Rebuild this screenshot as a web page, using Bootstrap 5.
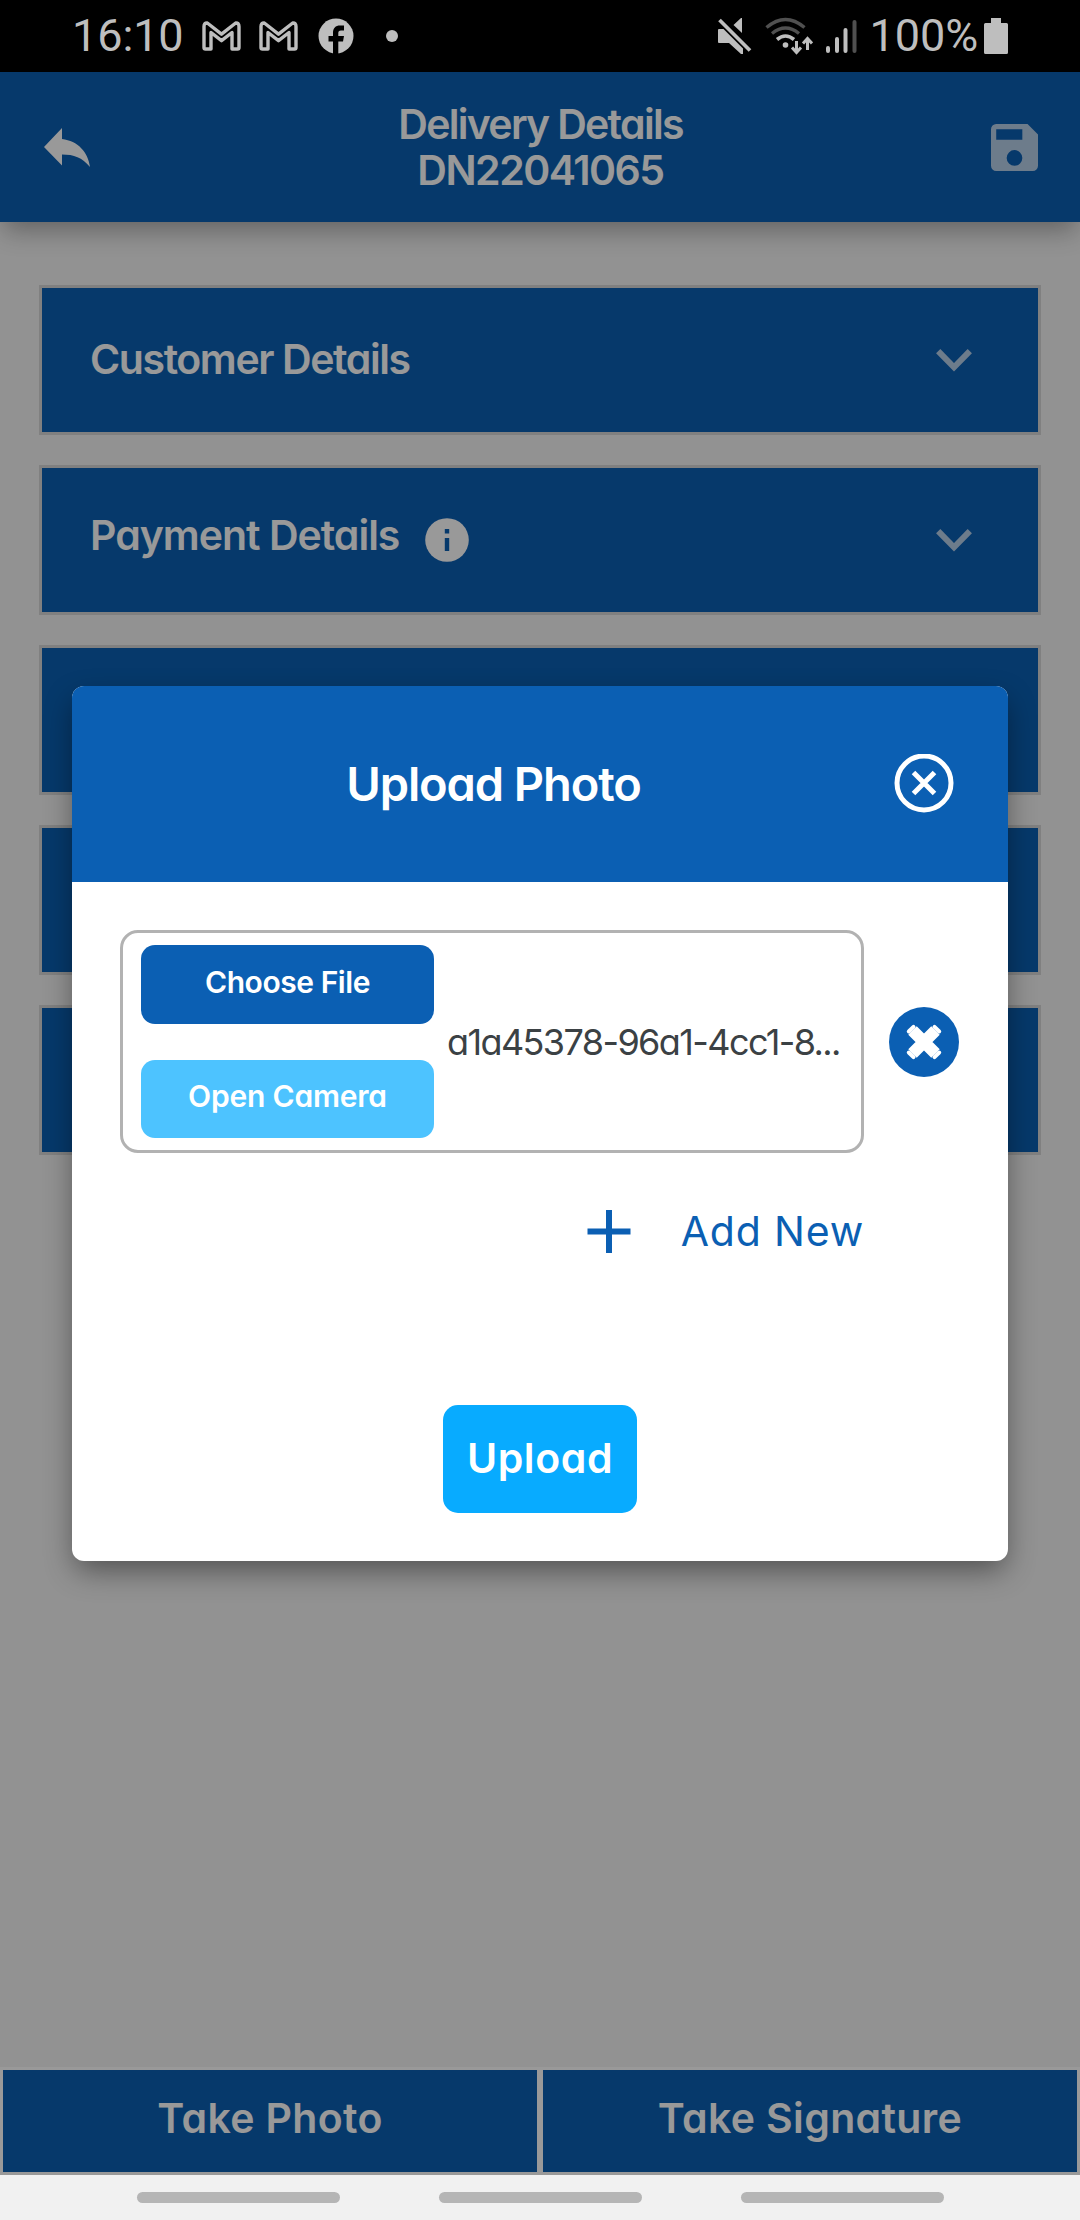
<!DOCTYPE html>
<html lang="en">
<head>
<meta charset="utf-8">
<meta name="viewport" content="width=device-width, initial-scale=1">
<title>Delivery Details</title>
<link rel="stylesheet" href="https://cdn.jsdelivr.net/npm/bootstrap@5.3.0/dist/css/bootstrap.min.css">
<style>
:root { --brand: #0b5fb3; --sky: #08abff; --sky-soft: #4dc3ff; }
body { font-family: Inter, "Open Sans", sans-serif; font-feature-settings: "cv11"; background: #f3f3f3; overflow: hidden; }
button { font-feature-settings: inherit; }
svg { display: block; flex: none; }
.screen { width: 1080px; height: 2220px; }

/* system bars */
.statusbar { height: 72px; background: #000; color: #bebebe; font: 400 45px/72px Roboto, sans-serif; padding: 0 72px; letter-spacing: -.1px; }
.note-a { margin-left: 18px; }
.note-b { margin-left: 20px; }
.note-dot { margin-left: 32px; }
.sig-gap { margin-left: 12px; }
.bat-gap { margin-left: 6px; }
.sysnav { height: 45px; background: #f1f1f1; gap: 99px; }
.sysnav span { width: 203px; height: 11px; border-radius: 6px; background: #b5b5b5; }

/* page */
.app-area { height: 2103px; background: #f3f3f3; }
.topbar { height: 150px; background: var(--brand); color: #fff; padding: 0 42px 0 44px; box-shadow: 0 12px 24px -4px rgba(0,0,0,.32); }
.topbar h1 { font-size: 41px; line-height: 46px; font-weight: 600; letter-spacing: -1.7px; }
.topbar h1 span { display: block; letter-spacing: -1.5px; }
.panels { padding: 63px 39px 0; gap: 30px; }
.panel-btn { height: 150px; border: 3px solid #d5d5d5; border-radius: 0; background: var(--brand); color: #fff; padding: 0 66px 0 48px; font-size: 41px; font-weight: 600; letter-spacing: -1.4px; }
.pay { letter-spacing: -1px; gap: 26px; }
.pay span { padding-bottom: 9px; }
.actions .btn { height: 108px; border: 3px solid #fff; border-radius: 0; background: var(--brand); color: #fff; font-size: 41px; font-weight: 600; letter-spacing: .35px; padding: 0 0 4px; }

/* dialog */
.scrim { background: rgba(0,0,0,.4); }
.upload-dialog { width: 936px; height: 875px; border: 0; border-radius: 12px; overflow: hidden; background: #fff; box-shadow: 0 12px 30px -3px rgba(0,0,0,.45); }
.upload-head { height: 196px; background: var(--brand); color: #fff; border: 0; border-radius: 0; padding: 0 54px 0 48px; gap: 27px; }
.upload-head h2 { font-size: 47px; font-weight: 600; letter-spacing: -1.1px; line-height: 60px; }
.upload-body { padding: 48px 48px 0; }
.file-row { gap: 25px; }
.file-box { width: 744px; height: 223px; border: 3px solid #b2b2b2; border-radius: 18px; padding: 0 18px; gap: 13px; }
.pick { width: 293px; gap: 36px; flex: none; }
.pick .btn { border: 0; border-radius: 14px; color: #fff; font-size: 30px; font-weight: 600; height: 79px; padding: 0 0 5px; letter-spacing: -.45px; background: var(--brand); }
.pick .btn.cam { background: var(--sky-soft); height: 78px; letter-spacing: -.2px; }
.fname { font-size: 36px; letter-spacing: -1.6px; color: #3b4144; white-space: nowrap; }
.add-link { margin: 47px 96px 0 0; height: 62px; gap: 50px; color: var(--brand); font-size: 41px; letter-spacing: .8px; padding: 0; border: 0; line-height: 62px; }
.upload-btn { width: 194px; height: 108px; margin-top: 143px; border: 0; border-radius: 15px; background: var(--sky); color: #fff; font-size: 41px; font-weight: 600; letter-spacing: .6px; padding: 0; }
</style>
<script src="https://cdn.jsdelivr.net/npm/bootstrap@5.3.0/dist/js/bootstrap.bundle.min.js"></script>
</head>
<body>
<svg width="0" height="0" class="d-none">
  <symbol id="gmail" viewBox="0 0 39 30"><path d="M5.300 2Q2 1.800 2 5.500V26.500Q2 28 3.500 28H9V11.500L19.500 19.700 30 11.500V28H35.500Q37 28 37 26.500V5.500Q37 1.800 33.700 2L19.500 13.200Z" fill="none" stroke="currentColor" stroke-width="3.400" stroke-linejoin="round"/></symbol>
  <symbol id="chev" viewBox="0 0 36 23"><path d="M2.200 2.200 18 18.300 33.800 2.200" fill="none" stroke="#fff" stroke-opacity=".7" stroke-width="6"/></symbol>
</svg>

<div class="screen d-flex flex-column">
  <div class="statusbar d-flex align-items-center justify-content-between">
    <div class="d-flex align-items-center">
      <span>16:10</span>
      <svg class="note-a" width="39" height="30"><use href="#gmail"/></svg>
      <svg class="note-a" width="39" height="30"><use href="#gmail"/></svg>
      <svg class="note-b" width="36" height="36" viewBox="0 0 36 36"><circle cx="18" cy="18" r="17.500" fill="currentColor"/><path d="M15 36V23.500H10.500V18H15V15C15 10 17.500 7.500 22 7.500H26V12.500H23C21 12.500 20.300 13.400 20.300 15.300V18H26L25 23.500H20.300V36Z" fill="#000"/></svg>
      <svg class="note-dot" width="12" height="12" viewBox="0 0 12 12"><circle cx="6" cy="6" r="6" fill="currentColor"/></svg>
    </div>
    <div class="d-flex align-items-center">
      <svg width="36" height="38" viewBox="0 0 36 38"><path d="M2 12H9L26 28V37H24L12 26H2Q1 26 1 25V13Q1 12 2 12ZM24 1H25V16L16.500 8Z" fill="currentColor"/><path d="M2.500 3 33 33.500" stroke="#000" stroke-width="7"/><path d="M2.500 3 33 33.500" stroke="currentColor" stroke-width="3.800"/></svg>
      <svg class="sig-gap" width="48" height="38" viewBox="0 0 48 38" fill="none"><g stroke="#505050" stroke-width="3.400"><path d="M1.500 10.500Q20.500-5.500 39.500 10.500"/><path d="M7 16.500Q20.500 5.500 34 16.500"/></g><path d="M12 22.500Q20.500 15.500 29 22.500" stroke="currentColor" stroke-width="3.600"/><circle cx="20.500" cy="28" r="2.800" fill="currentColor"/><path d="M31.500 24V35M27 30.500 31.500 35.500 36 30.500M42.500 33V22M38 26.500 42.500 21.500 47 26.500" stroke="currentColor" stroke-width="3"/></svg>
      <svg class="sig-gap" width="33" height="36" viewBox="0 0 33 36" stroke-width="4" stroke-linecap="round"><path d="M3 30V33M12 21V33M20.500 12V33" stroke="currentColor"/><path d="M29.500 4V33" stroke="#505050"/></svg>
      <span class="sig-gap">100%</span>
      <svg class="bat-gap" width="24" height="36" viewBox="0 0 24 36"><path d="M7 0H17V5H22.500Q24 5 24 6.500V34.500Q24 36 22.500 36H1.500Q0 36 0 34.500V6.500Q0 5 1.500 5H7Z" fill="currentColor"/></svg>
    </div>
  </div>

  <main class="app-area position-relative d-flex flex-column">
    <header class="topbar d-flex align-items-center justify-content-between">
      <svg width="46" height="39" viewBox="0 0 46 39"><path d="M0 19 18 0V11C34 13 44 24 46 39C38 29.500 30 26.500 18 26.500V37.500Z" fill="#fff"/></svg>
      <h1 class="m-0 text-center">Delivery Details<span>DN22041065</span></h1>
      <svg width="47" height="47" viewBox="3 3 18 18"><path d="M17 3H5a2 2 0 0 0-2 2v14a2 2 0 0 0 2 2h14a2 2 0 0 0 2-2V7zM12 19a3 3 0 1 1 0-6 3 3 0 0 1 0 6zM15 9H5V5h10z" fill="#fff" fill-opacity=".7"/></svg>
    </header>

    <section class="panels d-flex flex-column flex-grow-1">
      <button class="panel-btn btn d-flex align-items-center justify-content-between"><span>Customer Details</span><svg width="36" height="23"><use href="#chev"/></svg></button>
      <button class="panel-btn btn d-flex align-items-center justify-content-between">
        <span class="pay d-flex align-items-center"><span>Payment Details</span>
          <svg width="44" height="44" viewBox="0 0 44 44"><circle cx="22" cy="22" r="21.800" fill="#fff"/><path d="M19.800 11h4.400v4.400h-4.400zM19.800 20h4.400v13h-4.400z" fill="#0b5fb3"/></svg></span>
        <svg width="36" height="23"><use href="#chev"/></svg>
      </button>
      <button class="panel-btn btn"></button>
      <button class="panel-btn btn"></button>
      <button class="panel-btn btn"></button>
    </section>

    <footer class="actions row g-0">
      <div class="col-6"><button class="btn w-100">Take Photo</button></div>
      <div class="col-6"><button class="btn w-100">Take Signature</button></div>
    </footer>

    <div class="scrim position-absolute top-0 start-0 w-100 h-100 d-flex align-items-center justify-content-center">
      <div class="upload-dialog modal-content" role="dialog">
        <div class="upload-head modal-header">
          <h2 class="m-0 flex-grow-1 text-center">Upload Photo</h2>
          <svg width="60" height="60" viewBox="0 0 60 60" fill="none" stroke="#fff" stroke-width="5"><circle cx="30" cy="29" r="27"/><path d="M19.500 18.500 40.500 39.500M40.500 18.500 19.500 39.500"/></svg>
        </div>
        <div class="upload-body modal-body d-flex flex-column">
          <div class="file-row d-flex align-items-center">
            <div class="file-box d-flex align-items-center">
              <div class="pick d-flex flex-column">
                <button class="btn">Choose File</button>
                <button class="btn cam">Open Camera</button>
              </div>
              <span class="fname">a1a45378-96a1-4cc1-8...</span>
            </div>
            <svg width="70" height="70" viewBox="0 0 70 70"><circle cx="35" cy="35" r="35" fill="#0b5fb3"/><path d="M23.500 23.500 46.500 46.500M46.500 23.500 23.500 46.500" stroke="#fff" stroke-width="12"/><path d="M19.800 24.500 24.500 19.800M45.500 19.800 50.200 24.500M50.200 45.500 45.500 50.200M24.500 50.200 19.800 45.500" stroke="#fff" stroke-width="4" stroke-linecap="round"/></svg>
          </div>
          <button class="add-link btn d-flex align-items-center align-self-end">
            <svg width="44" height="43" viewBox="0 0 44 43"><path d="M22 0V43M0.500 21.500H43.500" stroke="#0b5fb3" stroke-width="6"/></svg>
            <span>Add New</span>
          </button>
          <button class="upload-btn btn align-self-center">Upload</button>
        </div>
      </div>
    </div>
  </main>

  <div class="sysnav d-flex align-items-center justify-content-center"><span></span><span></span><span></span></div>
</div>
</body>
</html>
